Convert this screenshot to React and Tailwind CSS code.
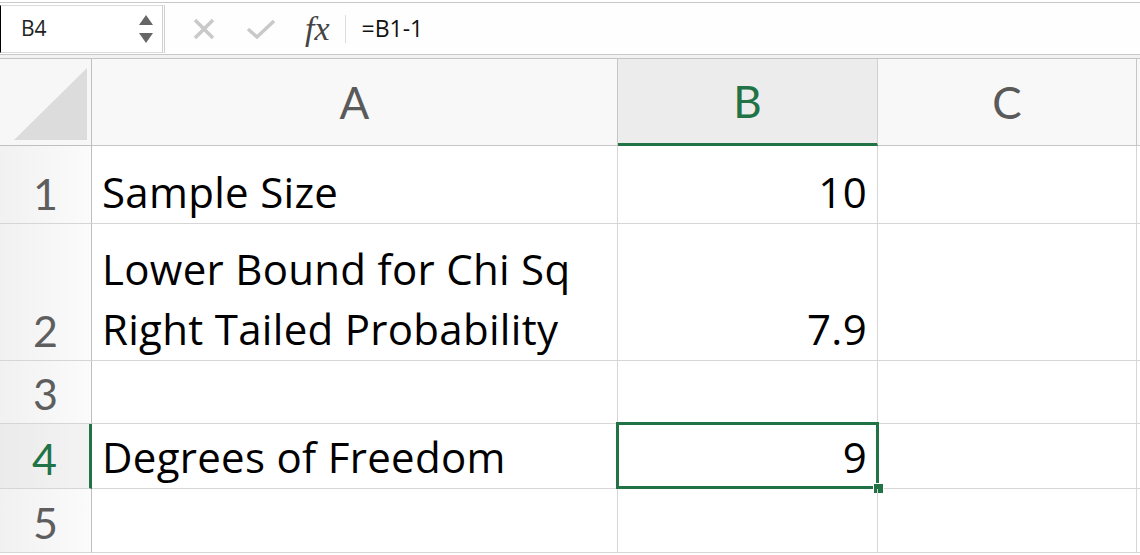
const font = { fontFamily: "Lato, 'Open Sans', sans-serif" };
const cellFont = { fontFamily: "'Open Sans', sans-serif" };

function RowHead({ n, active, h }) {
  return (
    <div
      className={`${h} flex items-end justify-center pb-[8px] border-b border-[#d6d6d6] bg-linear-to-r ${
        active
          ? "from-[#ebebeb] to-[#f3f3f3] border-r-[3px] border-r-[#217346] text-[#217346]"
          : "from-[#f1f1f1] to-[#fbfbfb] border-r border-r-[#bfbfbf] text-[#5e5e5e]"
      } text-[43px] leading-none`}
    >
      {n}
    </div>
  );
}

function Cell({ h, right, children, last }) {
  return (
    <div
      className={`${h} flex items-end pb-[1px] border-b border-[#d6d6d6] ${
        last ? "" : "border-r"
      } ${right ? "justify-end pr-[10px]" : "pl-[10px]"} text-[42px] tracking-[0.3px] leading-[60px] text-black`}
      style={cellFont}
    >
      {children}
    </div>
  );
}

export default function App() {
  const rows = [
    { n: 1, h: "h-[78px]", a: "Sample Size", b: "10" },
    { n: 2, h: "h-[137px]", a: ["Lower Bound for Chi Sq", "Right Tailed Probability"], b: "7.9" },
    { n: 3, h: "h-[63px]", a: "", b: "" },
    { n: 4, h: "h-[65px]", a: "Degrees of Freedom", b: "9", sel: true },
    { n: 5, h: "h-[64px]", a: "", b: "" },
  ];

  return (
    <div className="w-[1140px] h-[555px] overflow-hidden bg-white" style={font}>
      {/* formula bar */}
      <div className="mt-[2px] h-[53px] flex border-t border-b border-[#c9c9c9]">
        <div className="w-[165px] flex items-center border-l border-r-[3px] border-r-[#cfcfcf] border-double pl-[20px] pr-[8px] mt-[2px] mb-[1px] border-y border-y-[#dadada]">
          <span className="text-[21px] text-[#222] flex-1" style={cellFont}>B4</span>
          <svg width="16" height="32" viewBox="0 0 16 32" className="ml-auto">
            <polygon points="8,2 15,12 1,12" fill="#666" />
            <polygon points="1,20 15,20 8,30" fill="#666" />
          </svg>
        </div>
        <div className="flex-1 flex items-center bg-[#fefefe]">
          <svg width="24" height="22" viewBox="0 0 24 22" className="ml-[27px]">
            <path d="M3 2 L21 20 M21 2 L3 20" stroke="#c9c9c9" strokeWidth="3.5" />
          </svg>
          <svg width="30" height="22" viewBox="0 0 30 22" className="ml-[30px]">
            <path d="M2 11 L11 19 L28 3" stroke="#c9c9c9" strokeWidth="3.5" fill="none" />
          </svg>
          <span
            className="ml-[29px] text-[34px] italic text-[#444] leading-none"
            style={{ fontFamily: "'Liberation Serif', serif" }}
          >
            fx
          </span>
          <div className="ml-[15px] w-px h-[28px] bg-[#dcdcdc]" />
          <span className="ml-[16px] text-[23px] text-[#111]" style={cellFont}>
            =B1-1
          </span>
        </div>
      </div>
      <div className="h-[4px] bg-[#f2f2f2] border-b border-[#c4c4c4]" />

      {/* grid */}
      <div className="grid grid-cols-[92px_526px_260px_259px_1fr]">
        <div className="h-[87px] relative border-b border-r border-[#bfbfbf] bg-[#f7f7f7]">
          <svg width="92" height="86" className="absolute inset-0">
            <polygon points="14,81 87,81 87,9" fill="#dcdcdc" />
          </svg>
        </div>
        <div className="h-[87px] flex items-center justify-center border-b border-r border-[#c6c6c6] bg-[#f8f8f8] text-[44px] text-[#5a5a5a]">
          A
        </div>
        <div className="h-[87px] flex items-center justify-center border-b-[3px] border-b-[#217346] border-r border-r-[#d0d0d0] bg-[#ececec] text-[44px] text-[#217346]">
          B
        </div>
        <div className="h-[87px] flex items-center justify-center border-b border-r border-[#c6c6c6] bg-[#f8f8f8] text-[44px] text-[#5a5a5a]">
          C
        </div>
        <div className="h-[87px] border-b border-[#c6c6c6] bg-[#f8f8f8]" />

        {rows.map((r) => (
          <div key={r.n} className="contents">
            <RowHead n={r.n} h={r.h} active={r.sel} />
            <Cell h={r.h}>
              {Array.isArray(r.a) ? (
                <div className="flex flex-col">
                  {r.a.map((t) => (
                    <span key={t}>{t}</span>
                  ))}
                </div>
              ) : (
                r.a
              )}
            </Cell>
            <div className="relative">
              <Cell h={r.h} right>
                {r.b}
              </Cell>
              {r.sel && (
                <>
                  <div className="absolute -left-[2px] -top-[2px] w-[263px] h-[67px] border-[3px] border-[#217346]" />
                  <div className="absolute -right-[6px] -bottom-[5px] w-[11px] h-[11px] bg-[#217346] border border-white" />
                </>
              )}
            </div>
            <Cell h={r.h} />
            <Cell h={r.h} last />
          </div>
        ))}
      </div>
    </div>
  );
}
